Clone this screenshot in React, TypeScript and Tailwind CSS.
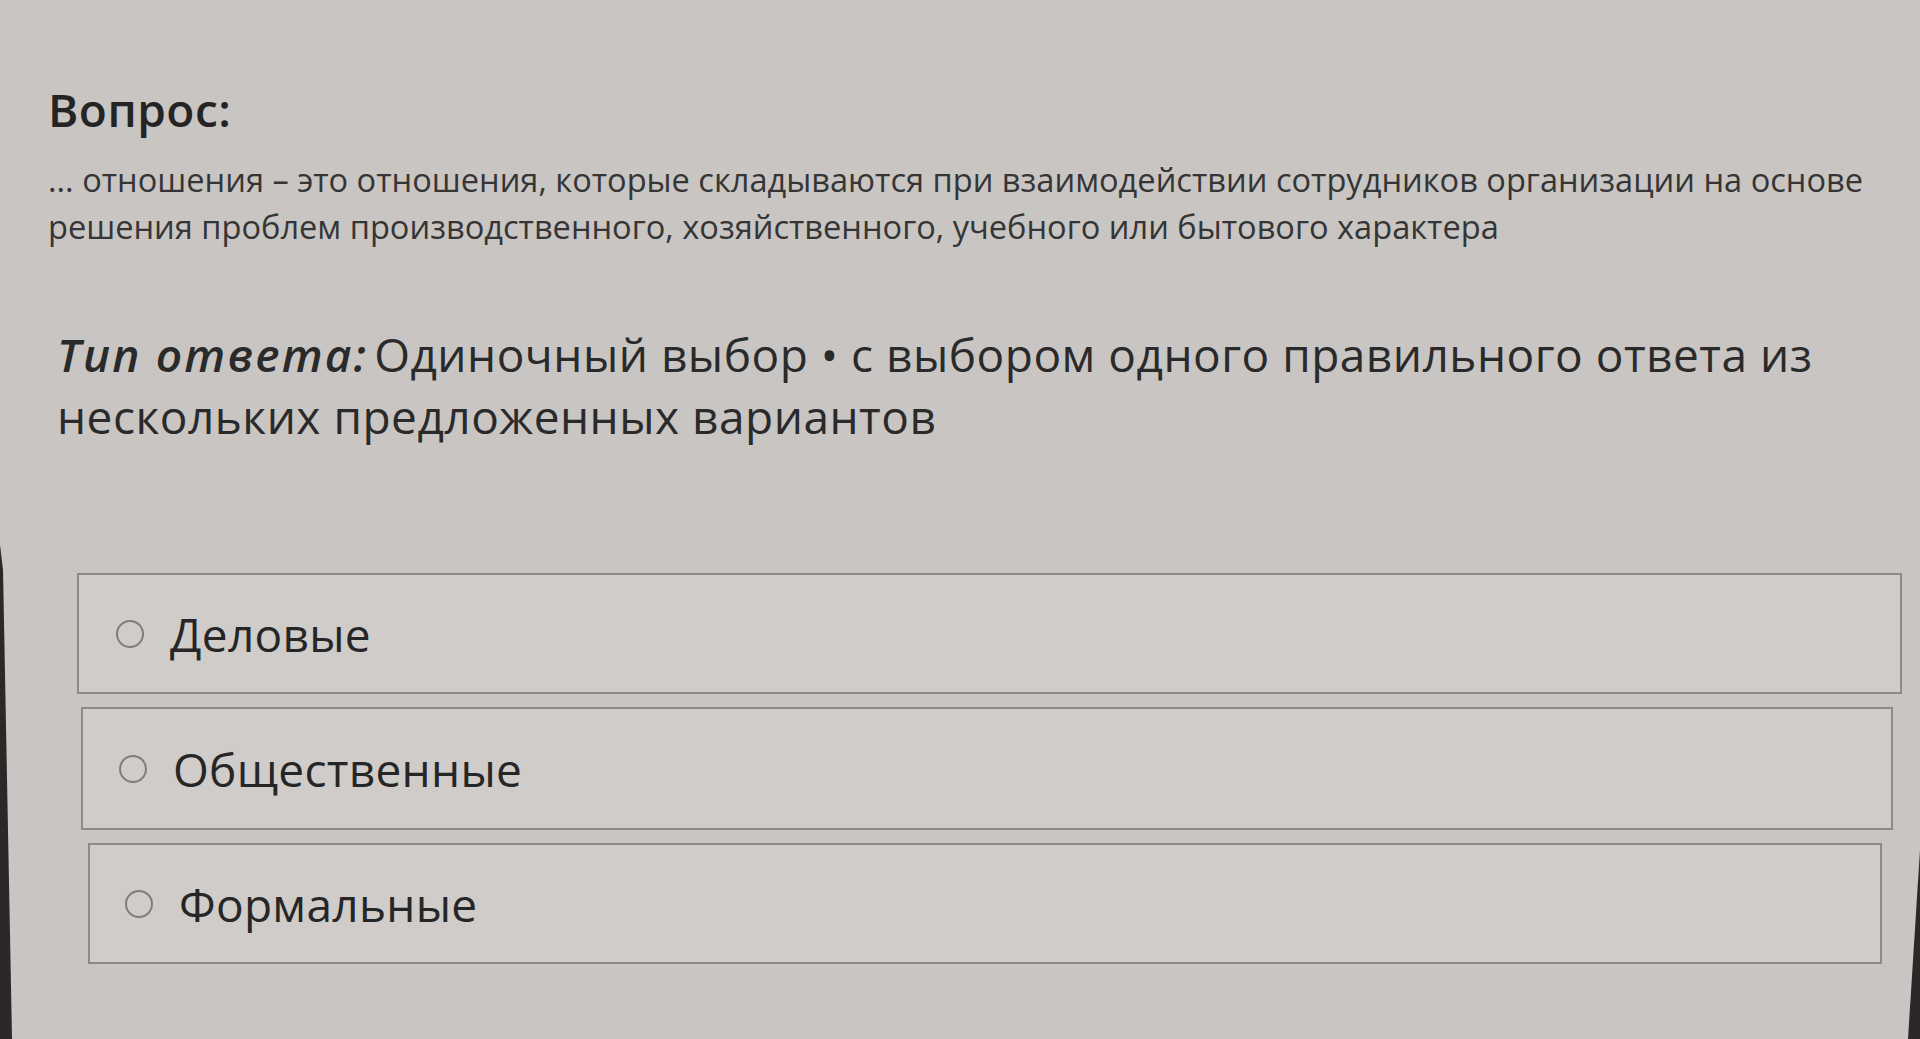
import React from "react";

const options = [
  { label: "Деловые", box: "ml-0 w-[1825px] h-[121px]", pad: "pl-[37px]" },
  { label: "Общественные", box: "ml-[4px] w-[1812px] h-[123px]", pad: "pl-[36px]" },
  { label: "Формальные", box: "ml-[11px] w-[1794px] h-[121px]", pad: "pl-[35px]" },
];

export default function App() {
  return (
    <div
      className="relative w-[1920px] h-[1039px] overflow-hidden bg-[#c8c5c3] text-[#2b2b2b]"
      style={{ fontFamily: '"Open Sans", "Noto Sans", sans-serif' }}
    >
      <div className="flex flex-col pl-[48px] pt-[82px]">
        <div className="text-[46px] leading-[54px] font-semibold tracking-[0.5px] text-[#242424]">Вопрос:</div>
        <div className="mt-[20px] text-[32.6px] leading-[47px] text-[#353535]">
          ... отношения – это отношения, которые складываются при взаимодействии сотрудников организации на основе
          <br />
          решения проблем производственного, хозяйственного, учебного или бытового характера
        </div>
        <div className="mt-[73px] ml-[9px] text-[46px] leading-[62px] tracking-[0.5px] text-[#2a2a2a]">
          <span className="italic font-semibold tracking-[2.2px]">Тип ответа:</span>
          <span className="ml-[6px]">Одиночный выбор • с выбором одного правильного ответа из</span>
          <br />
          нескольких предложенных вариантов
        </div>
        <div className="mt-[126px] ml-[29px] flex flex-col gap-[13px]">
          {options.map((o) => (
            <div
              key={o.label}
              className={`${o.box} ${o.pad} flex items-center border-2 border-[#8d8b8a] bg-[#cfccca]`}
            >
              <span className="w-[28px] h-[28px] rounded-full border-2 border-[#807e7d] shrink-0" />
              <span className="ml-[26px] text-[46px] leading-[60px] tracking-[0.3px] text-[#262626]">{o.label}</span>
            </div>
          ))}
        </div>
      </div>
      <div
        className="pointer-events-none absolute inset-0 bg-[#2a2828]"
        style={{ clipPath: "polygon(0 545px, 3px 570px, 12px 1039px, 0 1039px)" }}
      />
      <div
        className="pointer-events-none absolute inset-0 bg-[#2a2828]"
        style={{ clipPath: "polygon(1920px 850px, 1920px 1039px, 1908px 1039px)" }}
      />
    </div>
  );
}
